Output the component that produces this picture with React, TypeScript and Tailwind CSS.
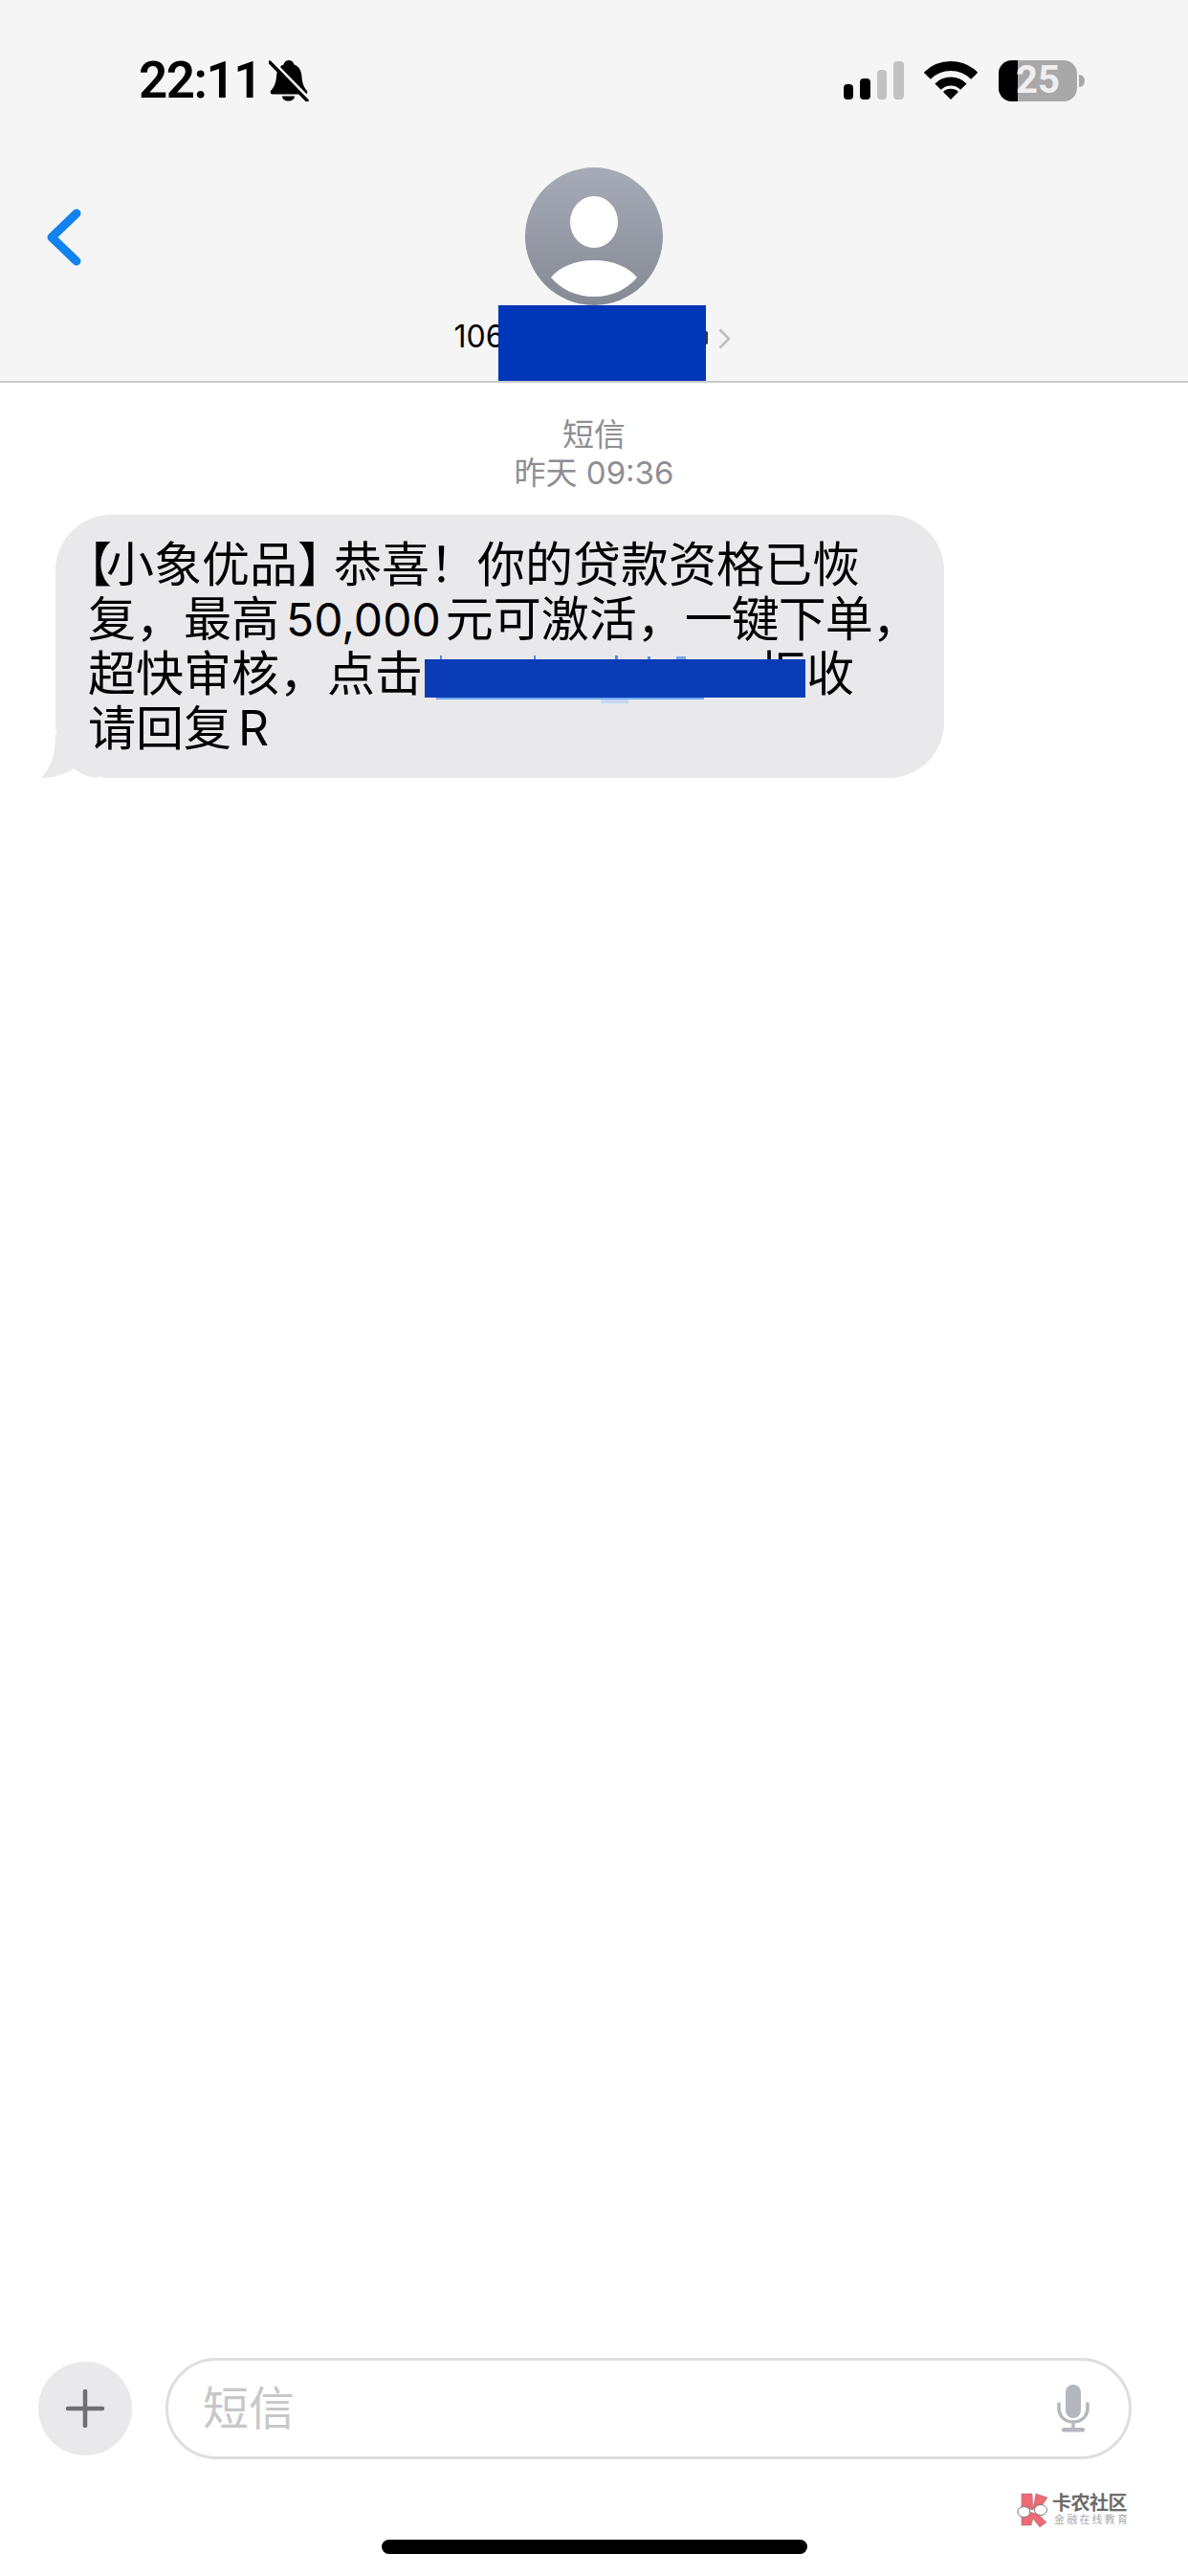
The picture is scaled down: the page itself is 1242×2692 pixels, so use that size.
import React from "react"

const cjk = "font-['Inter','Noto_Sans_CJK_SC',sans-serif]"

const BellSlash = () => (
	<svg width="42" height="44" viewBox="0 0 42 44" className="ml-[8px] -mt-[1px]">
		<path
			d="M21 1c3 0 5 2 5.500 4.500C32 7.500 34 12 34.500 18c.5 7 2 11 5.500 15 1 1.500 0 3.500-2 3.500H4c-2 0-3-2-2-3.500 3.500-4 5.500-8 6-15C8.500 12 10.500 7.500 15.500 5.500 16 3 18 1 21 1z"
			fill="#000"
		/>
		<path d="M14 38.500h13c0 3-3 5-6.500 5s-6.500-2-6.500-5z" fill="#000" />
		<path d="M3 1l39 40" stroke="#f5f5f5" strokeWidth="3" />
		<path d="M1 3l39 40" stroke="#000" strokeWidth="3.500" strokeLinecap="round" />
	</svg>
)

const Wifi = () => (
	<svg width="56" height="40" viewBox="0 0 56 40" className="ml-[21px]">
		<path d="M3.300 15.300A35 35 0 0 1 52.700 15.300" fill="none" stroke="#000" strokeWidth="10" />
		<path d="M14.600 26.600A19 19 0 0 1 41.400 26.600" fill="none" stroke="#000" strokeWidth="9" />
		<path d="M28 40L20 32A11.300 11.300 0 0 1 36 32z" fill="#000" />
	</svg>
)

// signal bars, two of them dimmed
const Signal = () => (
	<div className="flex items-end gap-[7px] h-[40px]">
		<div className="w-[10px] h-[16px] rounded-[4px] bg-black" />
		<div className="w-[11px] h-[22px] rounded-[4px] bg-black" />
		<div className="w-[10px] h-[31px] rounded-[4px] bg-[#c2c2c2]" />
		<div className="w-[11px] h-[40px] rounded-[4px] bg-[#c2c2c2]" />
	</div>
)

const Battery = () => (
	<div className="flex items-center ml-[22px]">
		<div className="relative w-[82px] h-[43px] rounded-[14px] bg-[#a8a8a8] flex items-center justify-center">
			<div className="absolute left-0 top-0 bottom-0 w-[20px] rounded-l-[14px] bg-black" />
			<span className="relative text-[#efefef] text-[40px] leading-none font-bold font-['Roboto',sans-serif]">25</span>
		</div>
		<div className="w-[6px] h-[13px] ml-[2px] rounded-r-full bg-[#a8a8a8]" />
	</div>
)

const Avatar = () => (
	<div className="w-[144px] h-[144px] rounded-full bg-gradient-to-b from-[#a7abb7] to-[#868a95]">
		<svg width="144" height="144" viewBox="0 0 144 144">
			<ellipse cx="72" cy="57" rx="25" ry="27" fill="#fff" />
			<path d="M27 115C36 104 52 97 72 97C92 97 108 104 117 115C106 128 90 135 72 135C54 135 38 128 27 115Z" fill="#fff" />
		</svg>
	</div>
)

const Header = () => (
	<div className="h-[400px] shrink-0 bg-[#f5f5f5] border-b-2 border-[#c9c9c9] flex flex-col">
		{/* status bar */}
		<div className="flex items-center justify-between pt-[62px] h-[106px] pl-[145px] pr-[108px]">
			<div className="flex items-center">
				<span className="text-[53px] leading-none font-semibold tracking-[-1.500px] text-black font-['Roboto',sans-serif]">22:11</span>
				<BellSlash />
			</div>
			<div className="flex items-center">
				<Signal />
				<Wifi />
				<Battery />
			</div>
		</div>

		{/* contact */}
		<div className="grid grid-cols-[1fr_auto_1fr] mt-[69px]">
			<div className="pl-[49px] pt-[43px]">
				<svg width="36" height="60" viewBox="0 0 36 60">
					<path d="M31 5L5 30L31 55" fill="none" stroke="#1282ee" strokeWidth="9" strokeLinecap="round" strokeLinejoin="round" />
				</svg>
			</div>
			<div className="flex flex-col items-center">
				<Avatar />
				<div className="flex items-center h-[79px] pr-[4px]">
					<span className={`w-[46px] whitespace-nowrap -mt-[14px] text-[32px] text-black ${cjk}`}>106</span>
					{/* redaction */}
					<div className="relative w-[217px] h-[79px] bg-[#0036b8]" />
					<div className="w-[2px] h-[14px] -mt-[12px] rounded-r-full bg-[#333333]" />
					<svg width="13" height="22" viewBox="0 0 13 22" className="ml-[11px] -mt-[10px]">
						<path d="M1.500 1.500L11 11L1.500 20.500" fill="none" stroke="#bdbdbd" strokeWidth="2.500" />
					</svg>
				</div>
			</div>
			<div />
		</div>
	</div>
)

// bits of the link text that stick out past the redaction bar
const linkTicks = [
	{ left: "left-[368px]", top: "top-[9px]", width: "w-[2px]", color: "bg-[#4f8fe6]" },
	{ left: "left-[466px]", top: "top-[9px]", width: "w-[2px]", color: "bg-[#4f8fe6]" },
	{ left: "left-[551px]", top: "top-[9px]", width: "w-[3px]", color: "bg-[#4f8fe6]" },
	{ left: "left-[585px]", top: "top-[10px]", width: "w-[3px]", color: "bg-[#4f8fe6]" },
	{ left: "left-[615px]", top: "top-[10px]", width: "w-[10px]", color: "bg-[#7aa9ea]" },
	{ left: "left-[536px]", top: "top-[55px]", width: "w-[29px]", color: "bg-[#c5d8f3]" },
]

const MessageBubble = () => (
	<div className="relative ml-[58px] mt-[24px] w-[929px] h-[275px]">
		{/* tail */}
		<svg width="60" height="46" viewBox="0 0 60 46" className="absolute -left-[15px] bottom-0">
			<path d="M15 0C15 22 10 36 0 46C14 46 26 42 34 36C42 42 50 46 60 46L60 0Z" fill="#e9e9eb" />
		</svg>
		<div className={`relative h-full rounded-[58px] bg-[#e9e9eb] pl-[34px] pt-[24px] text-[50px] leading-[57px] text-black whitespace-nowrap ${cjk}`}>
			<div>
				<span className="-ml-[25px] tracking-[-6px]">【</span>小象优品<span className="tracking-[-12px]">】</span>恭喜！你的贷款资格已恢
			</div>
			<div>
				复，最高<span className="ml-[7px] mr-[5px] text-[48px]">50,000</span>元可激活，<span className="tracking-[-1px]">一键下单</span>，
			</div>
			<div className="relative">
				超快审核，点击
				<span className="inline-block w-[351px]" />
				拒收
				<div className="absolute left-[364px] top-[53px] w-[280px] h-[2px] bg-[#6ea8ee]" />
				{linkTicks.map((t) => (
					<div key={t.left} className={`absolute h-[4px] ${t.color} ${t.left} ${t.top} ${t.width}`} />
				))}
				{/* redaction */}
				<div className="absolute left-[352px] top-[13px] w-[398px] h-[40px] bg-[#0a3cb8]" />
			</div>
			<div>
				请回复<span className="ml-[7px]">R</span>
			</div>
		</div>
	</div>
)

const Composer = () => (
	<div className="flex items-center pl-[40px] pr-[59px] gap-[35px]">
		<div className="w-[98px] h-[98px] rounded-full bg-[#e9e9eb] flex items-center justify-center shrink-0">
			<svg width="40" height="40" viewBox="0 0 40 40">
				<path d="M20 2V38M2 20H38" stroke="#6f6f74" strokeWidth="4.500" strokeLinecap="round" />
			</svg>
		</div>
		<div className="flex-1 h-[106px] rounded-full border-[3px] border-[#dedede] flex items-center justify-between pl-[36px] pr-[41px]">
			<span className={`text-[48px] text-[#c8c8ca] leading-none ${cjk}`}>短信</span>
			<svg width="34" height="50" viewBox="0 0 34 50">
				<rect x="9" y="0" width="16" height="35" rx="8" fill="#b4b7bd" />
				<path d="M2 20V24C2 33 8 39 17 39C26 39 32 33 32 24V20" fill="none" stroke="#b4b7bd" strokeWidth="3.500" strokeLinecap="round" />
				<path d="M17 39V46" stroke="#b4b7bd" strokeWidth="3.500" />
				<rect x="5" y="45" width="24" height="4.500" rx="2" fill="#b4b7bd" />
			</svg>
		</div>
	</div>
)

// community watermark in the corner of the picture
const Watermark = () => (
	<div className="absolute left-[1063px] top-[2605px] flex items-center">
		<svg width="33" height="36" viewBox="0 0 33 36">
			<path d="M5 1H16L17 18L5 15Z" fill="#ee6a75" stroke="#8b6a6a" strokeWidth="0.500" />
			<path d="M20 1L32 5L22 20L17 16Z" fill="#ee6a75" stroke="#8b6a6a" strokeWidth="0.500" />
			<path d="M12 20L22 22L31 31L24 36L17 27L15 34H5V22Z" fill="#ee6a75" stroke="#8b6a6a" strokeWidth="0.500" />
			<ellipse cx="7.500" cy="20" rx="6.500" ry="5.500" fill="#fff" stroke="#777" strokeWidth="1" />
			<ellipse cx="25" cy="18" rx="6.500" ry="5.500" fill="#fff" stroke="#777" strokeWidth="1" />
		</svg>
		<div className={`ml-[4px] flex flex-col ${cjk}`}>
			<span className="text-[20px] leading-[20px] font-bold tracking-[-0.500px] text-[#6b6b6b]">卡农社区</span>
			<span className="text-[11px] leading-[14px] tracking-[2.200px] text-[#aaaaaa] ml-[2px]">金融在线教育</span>
		</div>
	</div>
)

export default function App() {
	return (
		<div lang="zh-CN" className="relative w-[1242px] h-[2692px] bg-white flex flex-col overflow-hidden">
			<Header />
			<div className="flex-1 flex flex-col">
				<div className={`flex flex-col items-center pt-[34px] text-[33px] leading-[40px] text-[#8e8e93] ${cjk}`}>
					<div>短信</div>
					<div>昨天 09:36</div>
				</div>
				<MessageBubble />
			</div>
			<Composer />
			<div className="mt-[84px] mb-[23px] mx-auto w-[445px] h-[15px] rounded-full bg-black" />
			<Watermark />
		</div>
	)
}
